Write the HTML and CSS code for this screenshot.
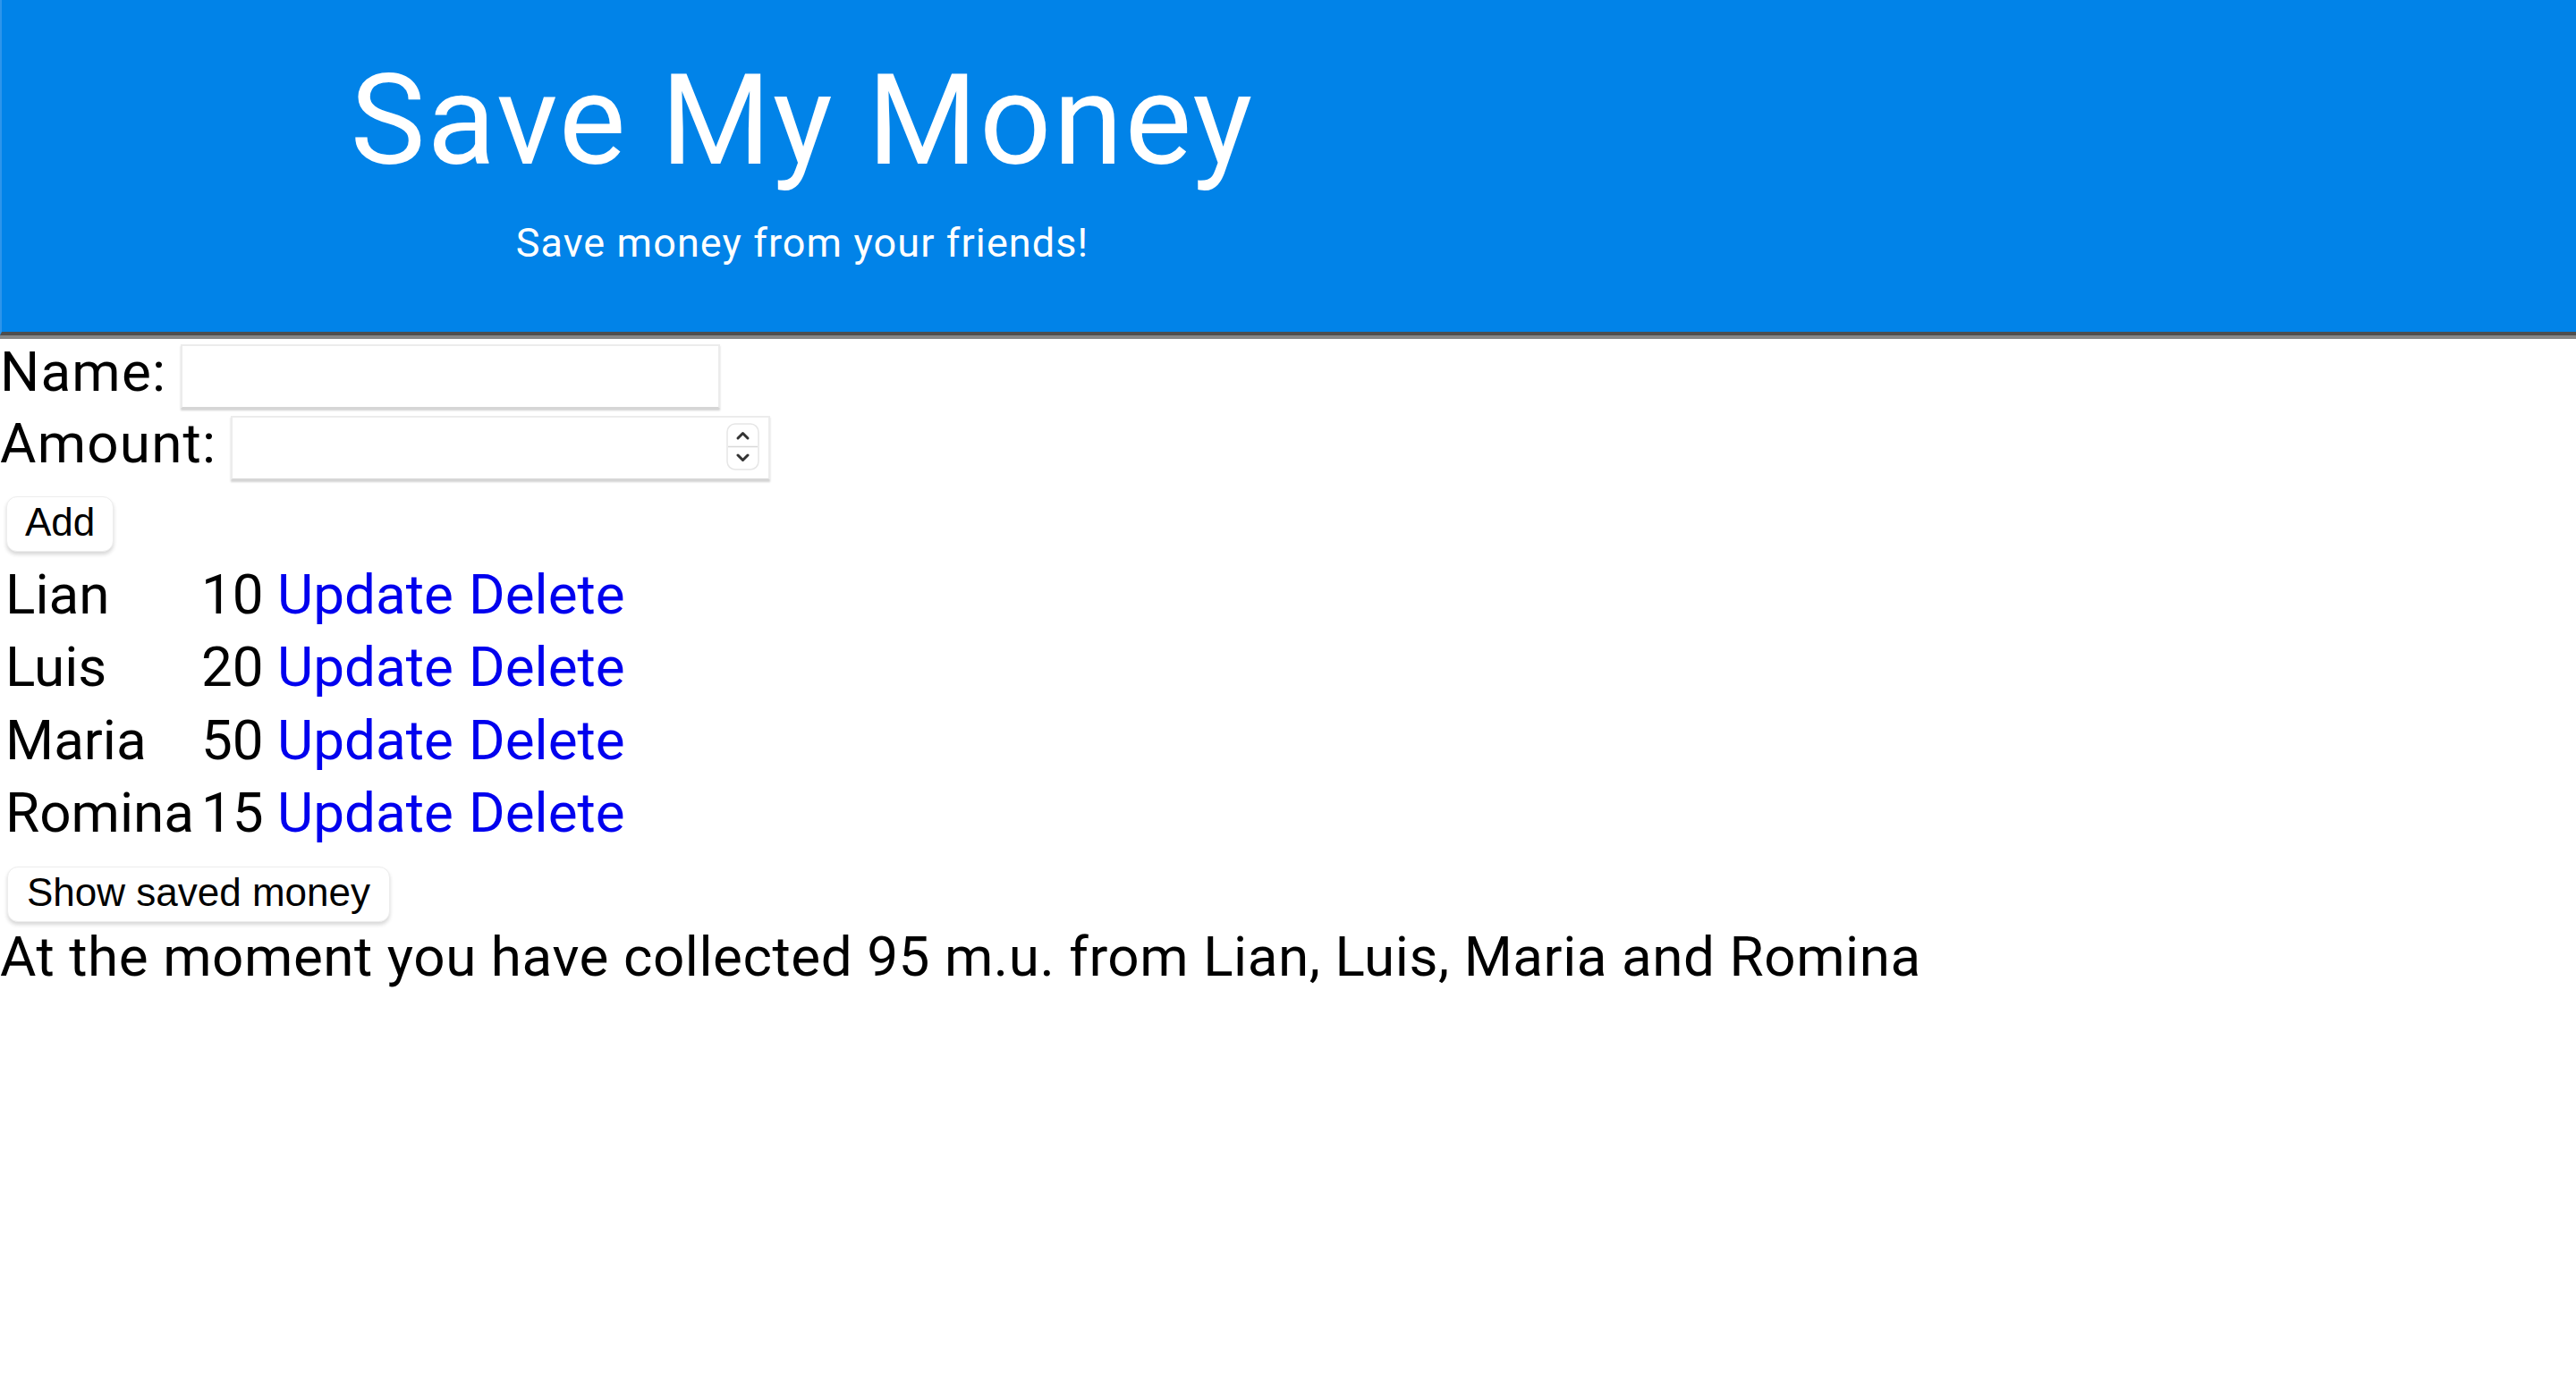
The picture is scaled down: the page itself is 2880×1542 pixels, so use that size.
FILE: index.html
```html
<!DOCTYPE html>
<html lang="en">
<head>
<meta charset="utf-8">
<title>Save My Money</title>
<link rel="stylesheet" href="styles.css">
</head>
<body>
<header class="header">
  <div class="brand">
    <h1 class="brand-title">Save My Money</h1>
    <p class="brand-subtitle">Save money from your friends!</p>
  </div>
</header>
<div class="header-rule"></div>
<main class="main">
  <form class="entry-form">
    <div class="field-row">
      <label class="field-label" for="name">Name:</label>
      <input class="text-input" id="name" type="text">
    </div>
    <div class="field-row">
      <label class="field-label" for="amount">Amount:</label>
      <div class="number-input">
        <input class="number-inner" id="amount" type="text" inputmode="numeric">
        <span class="spinner">
          <svg class="spinner-svg" width="37" height="53" viewBox="0 0 37 53">
            <rect x="1" y="1" width="35" height="51" rx="9" fill="#fff" stroke="#e6e6e6" stroke-width="1.5"/>
            <line x1="2" y1="26.5" x2="35" y2="26.5" stroke="#d8d8d8" stroke-width="1.5"/>
            <path d="M13 17 L18.5 11.5 L24 17" fill="none" stroke="#333" stroke-width="3" stroke-linecap="round" stroke-linejoin="round"/>
            <path d="M13 36 L18.5 41.5 L24 36" fill="none" stroke="#333" stroke-width="3" stroke-linecap="round" stroke-linejoin="round"/>
          </svg>
        </span>
      </div>
    </div>
    <button class="btn btn-add" type="button">Add</button>
  </form>

  <div class="friends">
    <span class="cell">Lian</span><span class="cell">10</span><a class="cell link" href="#">Update</a><a class="cell link" href="#">Delete</a>
    <span class="cell">Luis</span><span class="cell">20</span><a class="cell link" href="#">Update</a><a class="cell link" href="#">Delete</a>
    <span class="cell">Maria</span><span class="cell">50</span><a class="cell link" href="#">Update</a><a class="cell link" href="#">Delete</a>
    <span class="cell">Romina</span><span class="cell">15</span><a class="cell link" href="#">Update</a><a class="cell link" href="#">Delete</a>
  </div>

  <button class="btn btn-show" type="button">Show saved money</button>
  <p class="summary">At the moment you have collected 95 m.u. from Lian, Luis, Maria and Romina</p>
</main>
</body>
</html>
```

FILE: styles.css
```css
html, body {
  margin: 0;
  padding: 0;
  background: #ffffff;
}

body {
  font-family: Roboto, "Liberation Sans", sans-serif;
  color: #000000;
  font-size: 62px;
}

.header {
  background: #0183e8;
  border-left: 2px solid #2e95ea;
  padding: 50px 0 72px 0;
  border-bottom: 4px solid #4e4e4e;
}

.header-rule {
  height: 4px;
  background: #878787;
}

.brand {
  width: 1790px;
  text-align: center;
  color: #ffffff;
}

.brand-title {
  margin: 0;
  font-weight: 400;
  font-size: 141px;
  line-height: 169px;
  letter-spacing: 2.1px;
}

.brand-subtitle {
  margin: 26px 0 0 0;
  font-size: 45px;
  line-height: 54px;
  letter-spacing: 1.1px;
}

.main {
  display: flex;
  flex-direction: column;
  align-items: flex-start;
}

.entry-form {
  display: flex;
  flex-direction: column;
  align-items: flex-start;
  gap: 2px;
}

.field-row {
  display: flex;
  align-items: flex-start;
  gap: 16px;
  height: 78px;
}

.field-label {
  margin-top: 1px;
  line-height: 72px;
  font-size: 62px;
  letter-spacing: 1.2px;
}

.text-input,
.number-input {
  margin-top: 6px;
  width: 603px;
  height: 72px;
  box-sizing: border-box;
  border: 2px solid #ececec;
  border-bottom-color: #d6d6d6;
  box-shadow: 0 2px 2px rgba(0, 0, 0, 0.18);
  background: #ffffff;
  font-family: inherit;
  font-size: 44px;
  padding: 0 12px;
  outline: none;
}

.number-input {
  display: flex;
  align-items: flex-start;
  padding: 0 10px 0 0;
}

.number-inner {
  flex: 1;
  min-width: 0;
  height: 100%;
  border: 0;
  outline: none;
  font-family: inherit;
  font-size: 44px;
  padding: 0 12px;
  background: transparent;
}

.spinner {
  display: flex;
  margin-top: 6px;
}

.btn {
  font-family: "Liberation Sans", Arial, sans-serif;
  font-size: 44px;
  color: #000000;
  background: #ffffff;
  border: 1px solid #ededed;
  border-radius: 12px;
  box-shadow: 0 3px 4px rgba(0, 0, 0, 0.16);
  height: 62px;
  line-height: 56px;
  padding: 0 20px 4px 20px;
  box-sizing: border-box;
}

.btn-add {
  margin: 16px 0 0 7px;
  width: 120px;
}

.btn-show {
  margin: 20px 0 0 8px;
  width: 428px;
}

.friends {
  margin-top: 7px;
  padding-left: 6px;
  display: grid;
  grid-template-columns: 219px 85px 214px auto;
  line-height: 81.33px;
  font-size: 62px;
}

.cell {
  white-space: nowrap;
}

.link {
  color: #0000ee;
  text-decoration: none;
}

.summary {
  margin: 3px 0 0 0;
  font-size: 62px;
  line-height: 72px;
  letter-spacing: 0.55px;
  white-space: nowrap;
}
```
